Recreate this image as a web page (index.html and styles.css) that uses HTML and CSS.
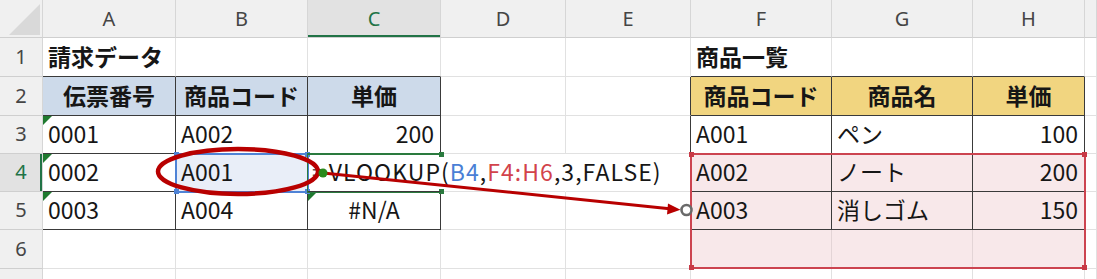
FILE: index.html
```html
<!DOCTYPE html>
<html lang="ja">
<head>
<meta charset="utf-8">
<title>VLOOKUP</title>
<link rel="stylesheet" href="styles.css">
</head>
<body>
<div class="sheet">
  <!-- header row -->
  <div class="c h corner"><span class="tri"></span></div>
  <div class="c h">A</div>
  <div class="c h">B</div>
  <div class="c h hact">C</div>
  <div class="c h">D</div>
  <div class="c h">E</div>
  <div class="c h">F</div>
  <div class="c h">G</div>
  <div class="c h">H</div>
  <div class="c h"></div>

  <!-- row 1 -->
  <div class="c h rn">1</div>
  <div class="c b tb">請求データ</div>
  <div class="c tb"></div>
  <div class="c tb"></div>
  <div class="c"></div>
  <div class="c"></div>
  <div class="c b tb">商品一覧</div>
  <div class="c tb"></div>
  <div class="c tb"></div>
  <div class="c"></div>

  <!-- row 2 -->
  <div class="c h rn">2</div>
  <div class="c t b ctr blue">伝票番号</div>
  <div class="c t b ctr blue">商品コード</div>
  <div class="c t b ctr blue">単価</div>
  <div class="c"></div>
  <div class="c tr"></div>
  <div class="c t b ctr gold">商品コード</div>
  <div class="c t b ctr gold">商品名</div>
  <div class="c t b ctr gold">単価</div>
  <div class="c"></div>

  <!-- row 3 -->
  <div class="c h rn">3</div>
  <div class="c t err">0001</div>
  <div class="c t">A002</div>
  <div class="c t rt">200</div>
  <div class="c"></div>
  <div class="c tr"></div>
  <div class="c t">A001</div>
  <div class="c t">ペン</div>
  <div class="c t rt">100</div>
  <div class="c"></div>

  <!-- row 4 -->
  <div class="c h rn ract">4</div>
  <div class="c t err">0002</div>
  <div class="c t selfill">A001</div>
  <div class="c t formula"><span class="eq">=</span>VLOOKUP(<span class="ref-b">B4</span>,<span class="ref-r">F4:H6</span>,3,FALSE)</div>
  <div class="c nogrid"></div>
  <div class="c tr"></div>
  <div class="c t pink">A002</div>
  <div class="c t pink">ノート</div>
  <div class="c t rt pink">200</div>
  <div class="c"></div>

  <!-- row 5 -->
  <div class="c h rn">5</div>
  <div class="c t err">0003</div>
  <div class="c t">A004</div>
  <div class="c t ctr err">#N/A</div>
  <div class="c"></div>
  <div class="c tr"></div>
  <div class="c t pink">A003</div>
  <div class="c t pink">消しゴム</div>
  <div class="c t rt pink">150</div>
  <div class="c"></div>

  <!-- row 6 -->
  <div class="c h rn">6</div>
  <div class="c"></div>
  <div class="c"></div>
  <div class="c"></div>
  <div class="c"></div>
  <div class="c"></div>
  <div class="c pink pg"></div>
  <div class="c pink pg"></div>
  <div class="c pink pg"></div>
  <div class="c"></div>

  <!-- row 7 -->
  <div class="c h rn">7</div>
  <div class="c"></div>
  <div class="c"></div>
  <div class="c"></div>
  <div class="c"></div>
  <div class="c"></div>
  <div class="c"></div>
  <div class="c"></div>
  <div class="c"></div>
  <div class="c"></div>

  <!-- overlays -->
  <div class="box sel-b4">
    <i class="hd tl"></i><i class="hd tr2"></i><i class="hd bl"></i><i class="hd br"></i>
  </div>
  <div class="box act-c4">
    <i class="hd tr2"></i><i class="hd br"></i>
  </div>
  <div class="box range-f">
    <i class="hd tl"></i><i class="hd tr2"></i><i class="hd bl"></i><i class="hd br"></i>
  </div>

  <svg class="marks" width="1097" height="279" viewBox="0 0 1097 279" aria-hidden="true">
    <ellipse cx="238" cy="171.5" rx="80" ry="22.5" fill="none" stroke="#b80000" stroke-width="4.5"/>
    <line x1="323" y1="173" x2="672" y2="209" stroke="#b80000" stroke-width="3"/>
    <polygon points="680.5,209.8 668,203.5 667,214.5" fill="#b80000"/>
    <circle cx="323" cy="173" r="4.5" fill="#2a8a1c"/>
    <circle cx="686.5" cy="210" r="5" fill="#ffffff" stroke="#6a6a6a" stroke-width="2.6"/>
  </svg>
</div>
</body>
</html>
```

FILE: styles.css
```css
html, body {
  margin: 0;
  padding: 0;
  background: #ffffff;
  overflow: hidden;
}

body {
  font-family: "Noto Sans CJK JP", "Noto Sans", sans-serif;
}

.sheet {
  position: relative;
  width: 1097px;
  height: 279px;
  overflow: hidden;
  display: grid;
  grid-template-columns: 43px 133px 132px 133px 125px 125px 141px 141px 112px 1fr;
  grid-template-rows: 38px 39px 39px 38px 38px 38px 39px 40px;
}

.c {
  position: relative;
  min-width: 0;
  display: flex;
  align-items: center;
  padding: 0 5px 3px;
  border-right: 1px solid #e1e1e1;
  border-bottom: 1px solid #e1e1e1;
  font-size: 23px;
  color: #161616;
  white-space: nowrap;
}

/* headers */
.h {
  justify-content: center;
  padding: 0 0 1px;
  background: #f0f0f0;
  border-right-color: #d6d6d6;
  border-bottom-color: #cfcfcf;
  color: #454545;
  font-family: "Noto Sans", "Liberation Sans", sans-serif;
  font-size: 20px;
}

.rn {
  padding-bottom: 2px;
}

.corner {
  padding: 0;
}

.tri {
  position: absolute;
  right: 2px;
  bottom: 2px;
  width: 0;
  height: 0;
  border-style: solid;
  border-width: 0 0 31px 31px;
  border-color: transparent transparent #d9d9d9 transparent;
}

.hact {
  background: #e2e2e2;
  color: #217346;
  box-shadow: inset 0 -2px 0 #217346;
}

.ract {
  background: #e2e2e2;
  color: #217346;
  box-shadow: inset -2px 0 0 #217346;
}

/* table borders */
.t {
  border-right-color: #3a3a3a;
  border-bottom-color: #3a3a3a;
}

.tb {
  border-bottom-color: #3a3a3a;
}

.tr {
  border-right-color: #3a3a3a;
}

.nogrid {
  border-right-color: transparent;
}

.b {
  font-weight: 700;
}

.ctr {
  justify-content: center;
}

.rt {
  justify-content: flex-end;
  padding-right: 6px;
}

.blue {
  background: #cddaea;
}

.gold {
  background: #f1d580;
}

.pink {
  background: #f8e8ea;
}

.pg {
  border-right-color: #e3d4d6;
  border-bottom-color: #e3d4d6;
}

.selfill {
  background: #e9eef8;
}

/* error indicator */
.err::before {
  content: "";
  position: absolute;
  left: 0;
  top: 0;
  width: 0;
  height: 0;
  border-style: solid;
  border-width: 9px 9px 0 0;
  border-color: #1f7a2f transparent transparent transparent;
}

/* formula edit text */
.formula {
  z-index: 4;
  padding-left: 4px;
  letter-spacing: 1.05px;
  border-right-color: transparent;
}

.eq {
  color: #555;
  margin-right: 3px;
}

.ref-b {
  color: #4a7fd6;
}

.ref-r {
  color: #d2434b;
}

/* overlays */
.box {
  position: absolute;
  box-sizing: border-box;
  z-index: 2;
}

.sel-b4 {
  left: 175px;
  top: 153px;
  width: 134px;
  height: 40px;
  border: 2px solid #4f83d6;
}

.sel-b4 .hd {
  background: #4f83d6;
}

.act-c4 {
  left: 307px;
  top: 153px;
  width: 134px;
  height: 40px;
  border: 2px solid #2a7a3e;
  border-left-width: 1px;
  border-right-width: 0;
}

.act-c4 .hd {
  background: #2a7a3e;
}

.range-f {
  left: 690px;
  top: 153px;
  width: 396px;
  height: 116px;
  border: 2px solid #cc4450;
}

.range-f .hd {
  background: #c83a46;
}

.hd {
  position: absolute;
  width: 5px;
  height: 5px;
}

.hd.tl { left: -3px; top: -3px; }
.hd.tr2 { right: -3px; top: -3px; }
.hd.bl { left: -3px; bottom: -3px; }
.hd.br { right: -3px; bottom: -3px; }

.marks {
  position: absolute;
  left: 0;
  top: 0;
  z-index: 5;
  pointer-events: none;
}
```
